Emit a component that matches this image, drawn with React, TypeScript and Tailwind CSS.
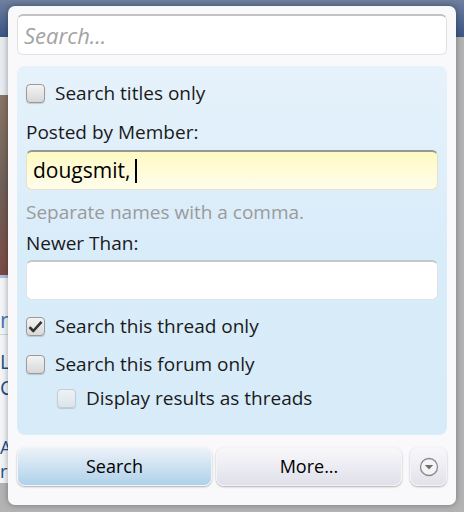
import React from "react";

const font = { fontFamily: '"Open Sans", "DejaVu Sans", sans-serif' };

function Box({ checked = false, dim = false }: { checked?: boolean; dim?: boolean }) {
  return (
    <span
      className={
        "relative flex h-[19px] w-[19px] shrink-0 items-center justify-center rounded-[4px] border shadow-[0_1px_1px_rgba(0,0,0,0.15)] " +
        (dim
          ? "border-[#c4ccd4] bg-gradient-to-b from-[#eef2f6] to-[#dde4ea]"
          : "border-[#9a9a9a] bg-gradient-to-b from-[#f4f4f4] to-[#d8d8d8]")
      }
    >
      {checked && (
        <svg width="15" height="13" viewBox="0 0 15 13">
          <path d="M1.5 7.2 L5.3 11 L13.5 1.8" fill="none" stroke="#333" strokeWidth="2.6" strokeLinejoin="round" />
        </svg>
      )}
    </span>
  );
}

export default function App() {
  return (
    <div className="relative h-[512px] w-[464px] overflow-hidden bg-[#b3b3b3]" style={font}>
      {/* page behind the popup */}
      <div className="h-[37px] bg-gradient-to-b from-[#6f7f9f] to-[#3a5685]" />
      <div className="flex w-[30px] flex-col bg-[#f2f4f7]">
        <div className="h-[58px] bg-[#e7ebf0]" />
        <div className="h-[180px] bg-gradient-to-b from-[#8a7464] via-[#6e6058] to-[#7b4a45]" />
        <div className="h-[3px] bg-[#a9c3dc]" />
        <div className="h-[26px]" />
        <div className="text-[22px] leading-[30px] text-[#3d78b0]">nt</div>
        <div className="h-[1px] bg-[#c8d6e4]" />
        <div className="pt-[14px] text-[20px] leading-[26px] text-[#1f4f80]">L<br />C</div>
        <div className="pt-[34px] text-[18px] leading-[24px] text-[#1f4f80]">A<br />r</div>
      </div>

      {/* popup */}
      <div className="absolute left-[8px] top-[6px] flex h-[499px] w-[448px] flex-col rounded-[7px] bg-[#f9f9fc] px-[9px] pt-[8px] shadow-[0_0_6px_rgba(0,0,0,0.35)]">
        <div className="flex h-[41px] items-center rounded-[6px] border border-[#e2e2e2] border-t-[#c2c2c2] border-t-2 bg-white px-[6px] text-[22px] italic text-[#a3a3a3]">
          Search...
        </div>

        <div className="mt-[11px] flex h-[369px] flex-col rounded-[8px] bg-gradient-to-b from-[#e6f2fb] via-[#d9ecfa] to-[#d7ebf9] px-[9px] pt-[18px] text-[19px] text-[#1a1a1a]">
          <label className="flex h-[19px] items-center gap-[10px]">
            <Box />
            <span>Search titles only</span>
          </label>

          <div className="mt-[16px] leading-[26px]">Posted by Member:</div>
          <div className="mt-[5px] flex h-[40px] items-center rounded-[6px] border border-[#e6e2c8] border-t-2 border-t-[#969696] bg-gradient-to-b from-[#fff9c2] to-[#fffdec] px-[6px] text-[21px] text-black">
            dougsmit,<span className="ml-[5px] inline-block h-[24px] w-[2px] bg-black" />
          </div>
          <div className="mt-[9px] text-[19px] leading-[26px] text-[#9a9a9a]">Separate names with a comma.</div>
          <div className="mt-[5px] leading-[26px]">Newer Than:</div>
          <div className="mt-[4px] h-[40px] rounded-[6px] border border-[#e2e2e2] border-t-2 border-t-[#c6c6c6] bg-white" />

          <label className="mt-[17px] flex h-[19px] items-center gap-[10px]">
            <Box checked />
            <span>Search this thread only</span>
          </label>
          <label className="mt-[19px] flex h-[19px] items-center gap-[10px]">
            <Box />
            <span>Search this forum only</span>
          </label>
          <label className="ml-[31px] mt-[15px] flex h-[19px] items-center gap-[10px]">
            <Box dim />
            <span>Display results as threads</span>
          </label>
        </div>

        <div className="mt-[12px] flex h-[39px] gap-[4px] text-[18px] text-black">
          <button className="w-[195px] rounded-[8px] border border-[#f2f6fa] bg-gradient-to-b from-[#edf2f8] to-[#aed1ea] shadow-[0_1px_2px_rgba(0,0,0,0.3)]">
            Search
          </button>
          <button className="w-[186px] rounded-[8px] border border-[#f4f4f8] bg-gradient-to-b from-[#f8f8fb] to-[#e0e0ea] shadow-[0_1px_2px_rgba(0,0,0,0.3)]">
            More...
          </button>
          <button className="ml-[4px] flex w-[37px] items-center justify-center rounded-[8px] border border-[#f4f4f8] bg-gradient-to-b from-[#f8f8fb] to-[#e2e2ea] shadow-[0_1px_2px_rgba(0,0,0,0.3)]">
            <svg width="20" height="20" viewBox="0 0 20 20">
              <circle cx="10" cy="10" r="8.5" fill="#f4f4f6" stroke="#8a8a8a" strokeWidth="1.3" />
              <path d="M5.8 8 L14.2 8 L10 12.6 Z" fill="#707070" />
            </svg>
          </button>
        </div>
      </div>
    </div>
  );
}
